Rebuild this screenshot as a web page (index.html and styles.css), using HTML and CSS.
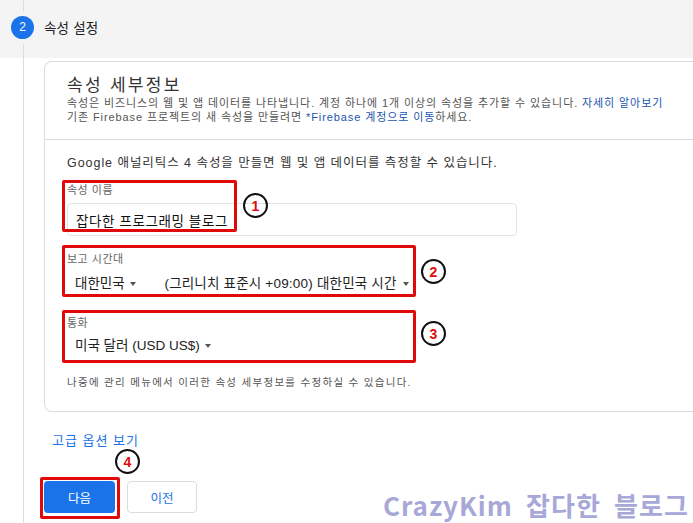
FILE: index.html
```html
<!DOCTYPE html>
<html lang="ko">
<head>
  <meta charset="UTF-8">
  <title>속성 설정</title>
  <link rel="stylesheet" href="styles.css">
</head>
<body>

  <div class="step-head">
    <span class="step-num">2</span>
    <span class="step-title">속성 설정</span>
  </div>

  <section class="step-content">
    <div class="card">
      <div class="card-top">
        <h2>속성 세부정보</h2>
        <p class="desc">속성은 비즈니스의 웹 및 앱 데이터를 나타냅니다. 계정 하나에 1개 이상의 속성을 추가할 수 있습니다. <a href="#">자세히 알아보기</a></p>
        <p class="desc">기존 Firebase 프로젝트의 새 속성을 만들려면 <a href="#">*Firebase 계정으로 이동</a>하세요.</p>
      </div>
      <div class="card-body">
        <p class="intro">Google 애널리틱스 4 속성을 만들면 웹 및 앱 데이터를 측정할 수 있습니다.</p>

        <div class="field-label">속성 이름</div>
        <div class="text-input">잡다한 프로그래밍 블로그</div>

        <div class="field-label gap-lg">보고 시간대</div>
        <div class="select-row">
          <span class="select">대한민국 <i class="caret"></i></span>
          <span class="select">(그리니치 표준시 +09:00) 대한민국 시간 <i class="caret"></i></span>
        </div>

        <div class="field-label gap-xl">통화</div>
        <div class="select-row near">
          <span class="select">미국 달러 (USD US$) <i class="caret"></i></span>
        </div>

        <p class="note">나중에 관리 메뉴에서 이러한 속성 세부정보를 수정하실 수 있습니다.</p>
      </div>
    </div>

    <a class="adv-link" href="#">고급 옵션 보기</a>

    <div class="actions">
      <button class="btn btn-primary">다음</button>
      <button class="btn btn-outline">이전</button>
    </div>
  </section>

  <!-- annotations drawn over the screenshot -->
  <div class="mark box1"></div>
  <div class="mark box2"></div>
  <div class="mark box3"></div>
  <div class="mark box4"></div>
  <span class="num n1">1</span>
  <span class="num n2">2</span>
  <span class="num n3">3</span>
  <span class="num n4">4</span>

  <div class="watermark">CrazyKim 잡다한 블로그</div>

</body>
</html>
```

FILE: styles.css
```css
:root {
  --line: #dadce0;
  --blue: #1a73e8;
  --link: #1a55b0;
  --text: #202124;
  --muted: #5f6368;
  --red: #e10a0a;
}
* {
  box-sizing: border-box;
}
body {
  margin: 0;
  width: 693px;
  height: 523px;
  overflow: hidden;
  position: relative;
  background: #fff;
  font-family: "Liberation Sans", "Noto Sans CJK KR", sans-serif;
  color: var(--text);
}
a {
  text-decoration: none;
}

/* step header */
.step-head {
  position: relative;
  height: 58px;
  background: #f4f4f4;
  display: flex;
  align-items: center;
  padding-left: 11px;
  gap: 10px;
}
.step-head::before {
  content: "";
  position: absolute;
  left: 23px;
  top: 0;
  bottom: 0;
  border-left: 1px solid var(--line);
}
.step-num {
  position: relative;
  width: 23px;
  height: 23px;
  margin-top: -4px;
  border-radius: 50%;
  background: var(--blue);
  color: #fff;
  font-size: 12px;
  display: flex;
  align-items: center;
  justify-content: center;
  box-shadow: 0 0 0 5px #f4f4f4;
}
.step-title {
  font-size: 13.5px;
  margin-top: -4px;
  letter-spacing: 0.2px;
}

.step-content {
  margin-left: 23px;
  border-left: 1px solid var(--line);
  padding: 3px 0 10px 20px;
}

/* card */
.card {
  width: 700px;
  border: 1px solid var(--line);
  border-right: none;
  border-radius: 8px 0 0 8px;
}
.card-top {
  padding: 14px 22px 15px;
  border-bottom: 1px solid var(--line);
}
.card-top h2 {
  margin: 0;
  font-size: 17px;
  font-weight: 400;
  line-height: 20px;
  letter-spacing: 2.3px;
  color: #333;
}
.desc {
  margin: 0;
  font-size: 11px;
  line-height: 14px;
  letter-spacing: 0.9px;
  color: #555;
}
.desc a {
  color: var(--link);
}
.card-body {
  padding: 14px 22px 22px;
}
.intro {
  margin: 0;
  font-size: 12.5px;
  line-height: 18px;
  letter-spacing: 0.95px;
  color: #333;
}
.field-label {
  margin-top: 11px;
  font-size: 11px;
  line-height: 14px;
  letter-spacing: 0.5px;
  color: #666;
}
.field-label.gap-lg {
  margin-top: 16px;
}
.field-label.gap-xl {
  margin-top: 22px;
}
.text-input {
  margin-top: 6px;
  width: 450px;
  height: 33px;
  border: 1px solid #e3e3e3;
  border-radius: 4px;
  padding: 0 8px;
  display: flex;
  align-items: center;
  font-size: 13.5px;
  letter-spacing: 0.6px;
  color: #111;
}
.select-row {
  margin-top: 8px;
  padding-left: 8px;
  display: flex;
  gap: 22px;
  line-height: 20px;
  font-size: 13.5px;
  color: #222;
}
.select-row.near {
  margin-top: 6px;
}
.select-row .select + .select {
  margin-left: 6px;
  letter-spacing: 0.2px;
}
.caret {
  display: inline-block;
  margin-left: 2px;
  vertical-align: middle;
  border-left: 3.5px solid transparent;
  border-right: 3.5px solid transparent;
  border-top: 4px solid #555;
}
.note {
  margin: 19px 0 0;
  font-size: 10.5px;
  line-height: 14px;
  letter-spacing: 1.3px;
  color: #555;
}

.adv-link {
  display: inline-block;
  margin: 20px 0 0 8px;
  font-size: 13px;
  line-height: 18px;
  letter-spacing: 1px;
  color: var(--blue);
}

.actions {
  margin-top: 31px;
  display: flex;
  gap: 12px;
}
.btn {
  height: 32px;
  border-radius: 4px;
  font-family: inherit;
  font-size: 12.5px;
  cursor: pointer;
}
.btn-primary {
  width: 71px;
  background: var(--blue);
  color: #fff;
  border: none;
}
.btn-outline {
  width: 70px;
  background: #fff;
  color: var(--blue);
  border: 1px solid var(--line);
}

/* red annotation boxes and numbered circles */
.mark {
  position: absolute;
  border: 3px solid var(--red);
  border-radius: 2px;
}
.box1 { left: 62px; top: 180px; width: 175px; height: 52px; }
.box2 { left: 62px; top: 245px; width: 354px; height: 52px; }
.box3 { left: 62px; top: 310px; width: 354px; height: 53px; }
.box4 { left: 40px; top: 477px; width: 80px; height: 42px; }

.num {
  position: absolute;
  width: 25px;
  height: 25px;
  border: 2.5px solid #111;
  border-radius: 50%;
  display: flex;
  align-items: center;
  justify-content: center;
  font-size: 14px;
  font-weight: 700;
  color: var(--red);
}
.n1 { left: 243px; top: 193px; }
.n2 { left: 421px; top: 259px; }
.n3 { left: 421px; top: 321px; }
.n4 { left: 115px; top: 449px; }

.watermark {
  position: absolute;
  left: 383px;
  top: 487px;
  font-family: "Noto Sans CJK KR", sans-serif;
  font-size: 26px;
  line-height: 36px;
  font-weight: 700;
  letter-spacing: 1px;
  word-spacing: 5px;
  color: #a7a8d8;
  white-space: nowrap;
}
```
